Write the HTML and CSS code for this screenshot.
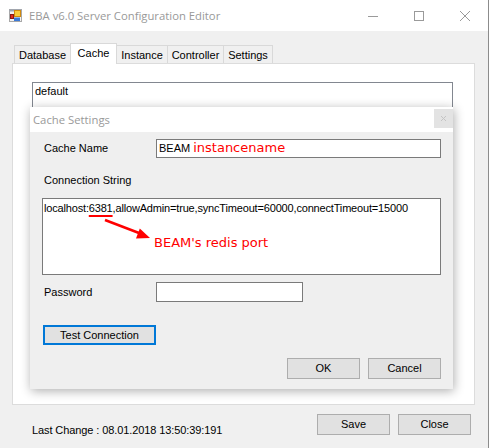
FILE: index.html
```html
<!DOCTYPE html>
<html>
<head>
<meta charset="utf-8">
<title>EBA v6.0 Server Configuration Editor</title>
<link rel="stylesheet" href="styles.css">
</head>
<body>
<div class="window">
  <div class="titlebar">
    <svg class="app-icon" viewBox="0 0 13 13" width="13" height="13">
      <rect x="0.5" y="0.5" width="12" height="12" fill="#f2f2f2" stroke="#a8a8a8"/>
      <rect x="0.5" y="0.5" width="12" height="2" fill="#9aa4b4"/>
      <rect x="1.5" y="5.5" width="3" height="4" fill="#e02a20" stroke="#8a1a14"/>
      <rect x="5.5" y="1.5" width="6" height="6" fill="#f8cc3c" stroke="#d08a10"/>
      <rect x="5" y="8.5" width="6" height="3.5" fill="#3c7ad8"/>
    </svg>
    <span class="title">EBA v6.0 Server Configuration Editor</span>
    <div class="controls">
      <div class="ctl"><svg width="10" height="10" viewBox="0 0 10 10"><line x1="0" y1="5.5" x2="10" y2="5.5"/></svg></div>
      <div class="ctl"><svg width="10" height="10" viewBox="0 0 10 10"><rect x="0.5" y="0.5" width="9" height="9"/></svg></div>
      <div class="ctl"><svg width="10" height="10" viewBox="0 0 10 10"><line x1="0" y1="0" x2="10" y2="10"/><line x1="10" y1="0" x2="0" y2="10"/></svg></div>
    </div>
  </div>

  <div class="content">
    <div class="tabs">
      <div class="tab tab-database">Database</div>
      <div class="tab tab-cache selected">Cache</div>
      <div class="tab tab-instance">Instance</div>
      <div class="tab tab-controller">Controller</div>
      <div class="tab tab-settings">Settings</div>
    </div>
    <div class="panel">
      <div class="listbox">default</div>
    </div>
    <div class="footer">
      <span class="last-change">Last Change : 08.01.2018 13:50:39:191</span>
      <div class="button-row">
        <button class="btn">Save</button>
        <button class="btn">Close</button>
      </div>
    </div>
  </div>

  <div class="dialog">
    <div class="dlg-title">
      <span class="dlg-title-text">Cache Settings</span>
      <div class="dlg-close"><svg width="5" height="5" viewBox="0 0 5 5"><line x1="0" y1="0" x2="5" y2="5"/><line x1="5" y1="0" x2="0" y2="5"/></svg></div>
    </div>
    <div class="dlg-body">
      <div class="field-row row-name">
        <span class="field-label">Cache Name</span>
        <div class="input input-name">BEAM<span class="note note-inline">instancename</span></div>
      </div>
      <div class="section-label">Connection String</div>
      <div class="textbox">
        <div class="conn-line">localhost:<span class="marked">6381</span>,allowAdmin=true,syncTimeout=60000,connectTimeout=15000</div>
        <div class="note note-port">BEAM's redis port</div>
        <svg class="arrow" width="120" height="50" viewBox="0 0 120 50">
          <line x1="62" y1="21" x2="96" y2="34" stroke="#ff0000" stroke-width="2.5"/>
          <polygon points="107,39 93,39.5 96.8,29.5" fill="#ff0000"/>
        </svg>
      </div>
      <div class="field-row row-password">
        <span class="field-label">Password</span>
        <div class="input input-password"></div>
      </div>
      <button class="btn btn-test">Test Connection</button>
      <div class="button-row dlg-actions">
        <button class="btn">OK</button>
        <button class="btn">Cancel</button>
      </div>
    </div>
  </div>
</div>
</body>
</html>
```

FILE: styles.css
```css
* { box-sizing: border-box; }

html, body {
  margin: 0;
  padding: 0;
}

body {
  width: 489px;
  height: 448px;
  overflow: hidden;
  background: #f0f0f0;
  font-family: "Liberation Sans", Arial, sans-serif;
  font-size: 11px;
  line-height: 13px;
  color: #000;
}

.window {
  position: relative;
  width: 489px;
  height: 448px;
  background: #f0f0f0;
  border-right: 1px solid #8c8c8c;
}

/* ---------- title bar ---------- */
.titlebar {
  display: flex;
  align-items: center;
  height: 31px;
  background: #fff;
}

.app-icon {
  flex: none;
  margin: -1px 7px 0 9px;
}

.title {
  flex: 1;
  font-family: "Open Sans", "Noto Sans", sans-serif;
  font-size: 11.3px;
  color: #999;
  white-space: nowrap;
}

.controls {
  display: flex;
  align-self: stretch;
}

.ctl {
  width: 46px;
  display: flex;
  align-items: center;
  justify-content: center;
}

.ctl svg {
  stroke: #9a9a9a;
  stroke-width: 1;
  fill: none;
}

/* ---------- main content ---------- */
.content {
  padding: 0 13px 0 12px;
}

.tabs {
  display: flex;
  align-items: flex-end;
  height: 32px;
  padding-left: 2px;
}

.tab {
  height: 18px;
  margin-left: -1px;
  padding-top: 3px;
  border: 1px solid #d9d9d9;
  border-bottom: none;
  background: #f0f0f0;
  text-align: center;
  white-space: nowrap;
}

.tab-database { width: 57px; margin-left: 0; }
.tab-cache { width: 47px; }
.tab-instance { width: 52px; }
.tab-controller { width: 57px; }
.tab-settings { width: 50px; }

.tab.selected {
  position: relative;
  z-index: 1;
  height: 21px;
  margin-bottom: -1px;
  background: #fff;
}

.panel {
  height: 342px;
  border: 1px solid #dcdcdc;
  background: #fff;
  padding: 18px 0 0 19px;
}

.listbox {
  width: 421px;
  height: 160px;
  border: 1px solid #828790;
  padding: 2px 2px;
  background: #fff;
}

.footer {
  display: flex;
  align-items: flex-start;
  padding: 9px 4px 0 20px;
}

.last-change {
  flex: 1;
  margin-top: 10px;
  letter-spacing: -0.1px;
}

.button-row {
  display: flex;
  gap: 8px;
}

.btn {
  width: 73px;
  height: 21px;
  padding: 0;
  border: 1px solid #adadad;
  background: #e1e1e1;
  font: inherit;
  color: #000;
}

/* ---------- dialog ---------- */
.dialog {
  position: absolute;
  left: 30px;
  top: 107px;
  width: 423px;
  height: 282px;
  background: #efefef;
  box-shadow: 1px 2px 10px rgba(0, 0, 0, 0.32);
}

.dlg-title {
  display: flex;
  height: 25px;
  padding-left: 3px;
  background: #fff;
}

.dlg-title-text {
  flex: 1;
  align-self: center;
  font-family: "Open Sans", "Noto Sans", sans-serif;
  font-size: 11.3px;
  color: #999;
}

.dlg-close {
  width: 19px;
  height: 19px;
  margin-top: 2px;
  background: #e3e3e3;
  display: flex;
  align-items: center;
  justify-content: center;
}

.dlg-close svg {
  stroke: #c4c4c4;
  stroke-width: 1;
}

.dlg-body {
  padding: 0 12px;
}

.field-row {
  display: flex;
  align-items: center;
  padding-left: 2px;
}

.field-label {
  width: 112px;
  flex: none;
}

.row-name { margin-top: 7px; }
.row-password { margin-top: 7px; }

.input {
  height: 19px;
  border: 1px solid #7a7a7a;
  background: #fff;
  padding-left: 2px;
  line-height: 17px;
  white-space: nowrap;
  overflow: hidden;
}

.input-name { width: 285px; }
.input-password { width: 147px; height: 20px; }

.note {
  font-family: "DejaVu Sans", Verdana, sans-serif;
  font-size: 13px;
  color: #ff0000;
}

.note-inline {
  line-height: 13px;
  margin-left: 3px;
}

.section-label {
  margin-top: 16px;
  padding-left: 2px;
}

.textbox {
  position: relative;
  width: 399px;
  height: 77px;
  margin-top: 11px;
  border: 1px solid #7a7a7a;
  background: #fff;
  padding: 3px 1px;
}

.conn-line {
  white-space: nowrap;
  letter-spacing: -0.17px;
}

.marked {
  text-decoration: underline;
  text-decoration-color: #ff0000;
  text-decoration-thickness: 2px;
  text-underline-offset: 3px;
}

.note-port {
  margin: 20px 0 0 110px;
  line-height: 15px;
  letter-spacing: 0;
}

.arrow {
  position: absolute;
  left: 0;
  top: 0;
}

.btn-test {
  display: block;
  width: 113px;
  height: 20px;
  margin: 23px 0 0 1px;
  border: 2px solid #0078d7;
}

.dlg-actions {
  justify-content: flex-end;
  margin-top: 13px;
}
```
